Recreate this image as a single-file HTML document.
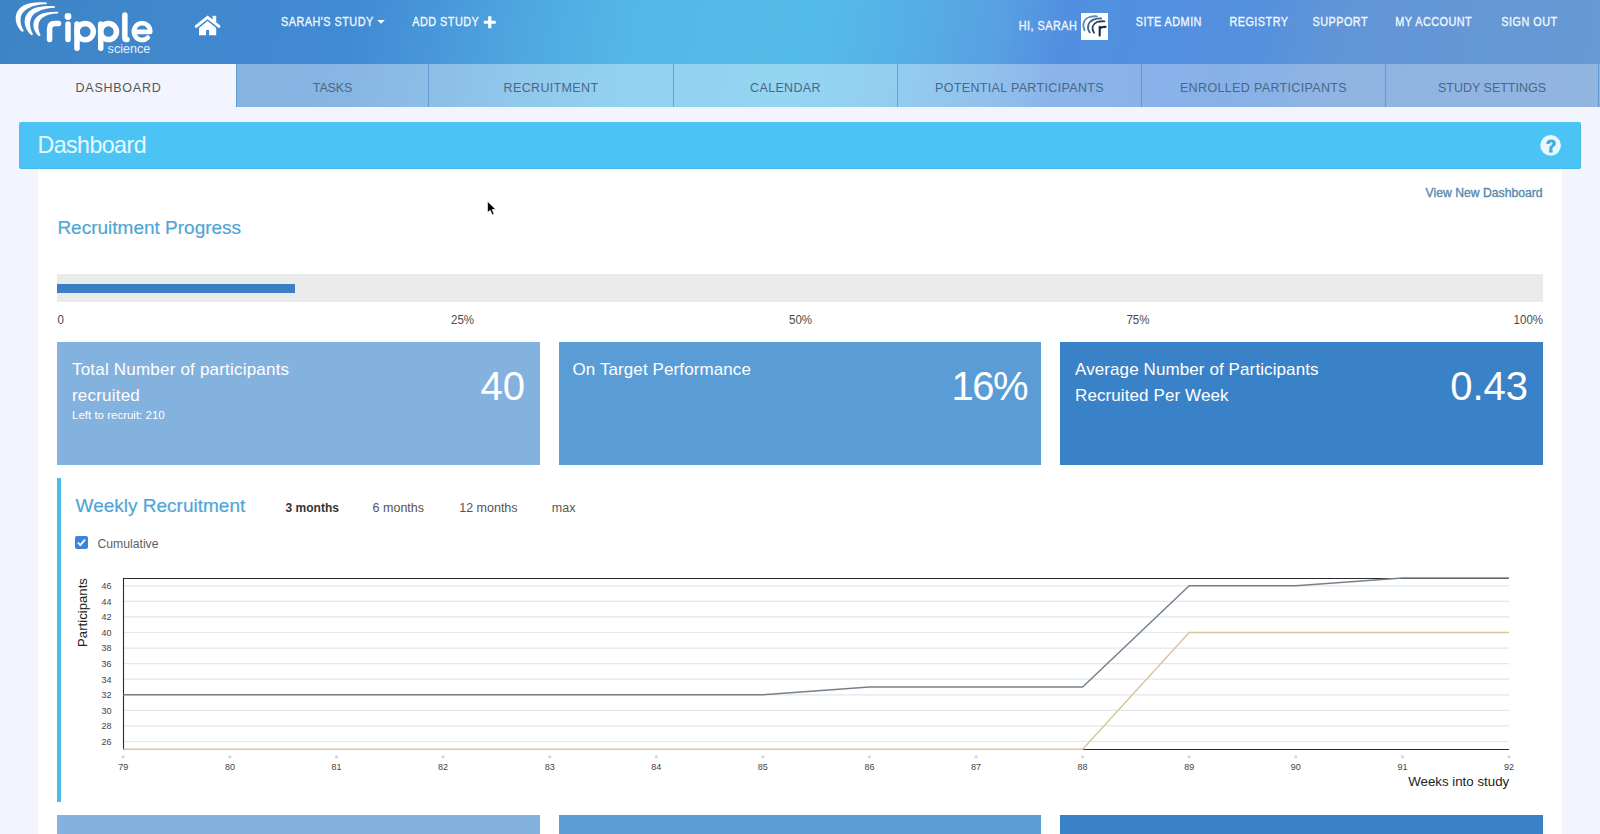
<!DOCTYPE html>
<html><head><meta charset="utf-8"><title>Dashboard</title>
<style>
*{margin:0;padding:0;box-sizing:border-box}
html,body{width:1600px;height:834px;overflow:hidden;background:#f2f5fd;font-family:"Liberation Sans",sans-serif}
.a{position:absolute}
svg{position:absolute;left:0;top:0}
</style></head><body>
<div class="a" style="left:0;top:0;width:1600px;height:107px;background:linear-gradient(100deg,#3d84c6 0%,#4087cc 10%,#418ad4 22%,#4896d9 27%,#50a8e1 33%,#54b8e9 40%,#54bcea 50%,#56b0e7 56%,#58a0e2 62%,#518fe0 66%,#5490dd 78%,#6295d7 83%,#6799d4 100%)"></div>
<div class="a" style="left:0;top:64px;width:1600px;height:43px;background:linear-gradient(90deg,rgba(255,255,255,.37) 0%,rgba(255,255,255,.37) 55%,rgba(255,255,255,.3) 75%,rgba(255,255,255,.28) 100%)"></div>
<div class="a" style="left:0;top:64px;width:236px;height:43px;background:#f2f5fd"></div>
<div class="a" style="left:236px;top:64px;width:1px;height:43px;background:rgba(55,125,190,0.5)"></div>
<div class="a" style="left:428px;top:64px;width:1px;height:43px;background:rgba(55,125,190,0.5)"></div>
<div class="a" style="left:673px;top:64px;width:1px;height:43px;background:rgba(55,125,190,0.5)"></div>
<div class="a" style="left:897px;top:64px;width:1px;height:43px;background:rgba(55,125,190,0.5)"></div>
<div class="a" style="left:1141px;top:64px;width:1px;height:43px;background:rgba(55,125,190,0.5)"></div>
<div class="a" style="left:1385px;top:64px;width:1px;height:43px;background:rgba(55,125,190,0.5)"></div>
<div class="a" style="left:1598px;top:64px;width:1px;height:43px;background:rgba(55,125,190,0.5)"></div>
<div class="a" style="left:19px;top:122px;width:1562px;height:47px;background:#4bc3f5;border-radius:2px;box-shadow:inset 0 -1px 0 rgba(40,120,170,0.12),inset -1px 0 0 rgba(40,120,170,0.12)"></div>
<div class="a" style="left:38px;top:169px;width:1524px;height:680px;background:#fff"></div>
<div class="a" style="left:57px;top:274px;width:1486px;height:28px;background:#e9ebeb"></div>
<div class="a" style="left:57px;top:284px;width:238px;height:9px;background:#3a7fc4"></div>
<div class="a" style="left:57px;top:342px;width:483px;height:123px;background:#84b2de"></div>
<div class="a" style="left:57px;top:815px;width:483px;height:30px;background:#84b2de"></div>
<div class="a" style="left:559px;top:342px;width:482px;height:123px;background:#5a9dd6"></div>
<div class="a" style="left:559px;top:815px;width:482px;height:30px;background:#5a9dd6"></div>
<div class="a" style="left:1060px;top:342px;width:483px;height:123px;background:#3a82c8"></div>
<div class="a" style="left:1060px;top:815px;width:483px;height:30px;background:#3a82c8"></div>
<div class="a" style="left:57px;top:478px;width:4px;height:324px;background:#4bbde9"></div>
<div class="a" style="left:75px;top:536px;width:12.5px;height:12.5px;background:#3a86d8;border-radius:2px"></div>
<svg width="1600" height="834" viewBox="0 0 1600 834" font-family='"Liberation Sans", sans-serif'>
<g fill="#fff">
<path d="M21.5,31.5 C14.5,24 12.5,12 23.5,5.5 C30,2 39,1.8 46.5,2.5 Q47.3,3.4 46.5,4.2 C39,4.2 30,6 25,10.5 C19.5,14.5 19,23 23.8,30.8 Q22.8,32 21.5,31.5 Z"/>
<path d="M30.8,34.8 C22.8,27 22,15 32.5,9 C39,5.8 47,5.6 54.6,6.2 Q55.4,7 54.6,7.9 C47,7.9 39,9.8 34,14 C29.5,18 28.5,26 33,34.2 Q32,35.5 30.8,34.8 Z"/>
<path d="M38.3,35.8 C32,29.5 31,20 39.5,14.8 C45,12 51.5,11.5 58,11.8 Q58.7,12.6 58,13.4 C52,13.4 46,14.8 42,18 C38,21.5 37,28 40.6,35.3 Q39.5,36.5 38.3,35.8 Z"/>
<circle cx="68" cy="16.5" r="3.4"/>
</g>
<g fill="none" stroke="#fff" stroke-width="5.5" stroke-linecap="round" stroke-linejoin="round">
<path d="M49.6,39.6 V29 C49.6,25.5 51.5,23.6 55,23.6 H58.6"/>
<path d="M68,24 V39.6"/>
<path d="M77,24 V48.2"/>
<circle cx="85.2" cy="31.6" r="8.1"/>
<path d="M100.75,24 V48.2"/>
<circle cx="108.5" cy="31.6" r="8.0"/>
<path d="M124.85,15 V37.5 C124.85,39 125.6,39.6 127,39.6"/>
<path d="M134.1,31.9 H150.3 A8.2,8.4 0 1 0 147.8,37.6" stroke-width="4.6"/>
</g>
<text x="107.6" y="53.4" font-size="12.6" fill="#e2f3fc" font-weight="normal" text-anchor="start" >science</text>
<g fill="#fff"><path d="M196.2,26.4 L207.6,17.3 L219,26.4" fill="none" stroke="#fff" stroke-width="2.9" stroke-linecap="round" stroke-linejoin="miter"/><rect x="212.6" y="15.8" width="3.6" height="6"/><path d="M199,35.2 V28 L207.6,21 L216.2,28 V35.2 H209.1 V30 H206.1 V35.2 Z"/></g>
<text transform="translate(281,26) scale(0.85,1)" x="0" y="0" font-size="12.8" fill="#f4f8fc" font-weight="normal" text-anchor="start" stroke="#f4f8fc" stroke-width="0.32" letter-spacing="0.55">SARAH'S STUDY</text>
<path d="M377.2,20 H384.8 L381,23.8 Z" fill="#fff"/>
<text transform="translate(412.3,26) scale(0.85,1)" x="0" y="0" font-size="12.8" fill="#f4f8fc" font-weight="normal" text-anchor="start" stroke="#f4f8fc" stroke-width="0.32" letter-spacing="0.55">ADD STUDY</text>
<path d="M489.75,16.3 V28.2 M483.8,22.25 H495.7" stroke="#fff" stroke-width="3.2"/>
<text transform="translate(1018.7,29.5) scale(0.85,1)" x="0" y="0" font-size="12.8" fill="#f4f8fc" font-weight="normal" text-anchor="start" stroke="#f4f8fc" stroke-width="0.32" letter-spacing="0.55">HI, SARAH</text>
<rect x="1081" y="13" width="27" height="27" fill="#fff"/>
<g fill="none" stroke-linecap="round"><path d="M1084.6,30.2 C1081.8,25 1083.5,19 1089.5,17 C1092,16.3 1094.5,16.2 1096.9,16.3" stroke="#5b8bb2" stroke-width="1.8"/><path d="M1089.7,32.4 C1086.5,27.5 1088,22 1093.5,19.6 C1096,18.6 1098.5,18.4 1101.2,18.4" stroke="#3f6288" stroke-width="1.8"/><path d="M1094,32.8 C1091,28.5 1092.5,24 1097,22 C1099.5,21.2 1102,21.2 1104.5,21.3" stroke="#35404d" stroke-width="1.8"/><path d="M1099.7,35.6 V26.8 M1099.9,29 C1100.5,27 1102.5,26.8 1105.5,26.9" stroke="#1b2c44" stroke-width="2.1"/></g>
<text transform="translate(1135.7,26) scale(0.85,1)" x="0" y="0" font-size="12.8" fill="#f4f8fc" font-weight="normal" text-anchor="start" stroke="#f4f8fc" stroke-width="0.32" letter-spacing="0.55">SITE ADMIN</text>
<text transform="translate(1229.4,26) scale(0.85,1)" x="0" y="0" font-size="12.8" fill="#f4f8fc" font-weight="normal" text-anchor="start" stroke="#f4f8fc" stroke-width="0.32" letter-spacing="0.55">REGISTRY</text>
<text transform="translate(1312.5,26) scale(0.85,1)" x="0" y="0" font-size="12.8" fill="#f4f8fc" font-weight="normal" text-anchor="start" stroke="#f4f8fc" stroke-width="0.32" letter-spacing="0.55">SUPPORT</text>
<text transform="translate(1395.3,26) scale(0.85,1)" x="0" y="0" font-size="12.8" fill="#f4f8fc" font-weight="normal" text-anchor="start" stroke="#f4f8fc" stroke-width="0.32" letter-spacing="0.55">MY ACCOUNT</text>
<text transform="translate(1501.3,26) scale(0.85,1)" x="0" y="0" font-size="12.8" fill="#f4f8fc" font-weight="normal" text-anchor="start" stroke="#f4f8fc" stroke-width="0.32" letter-spacing="0.55">SIGN OUT</text>
<text x="118.5" y="92.1" font-size="12.5" fill="#555" font-weight="normal" text-anchor="middle" letter-spacing="0.75" >DASHBOARD</text>
<text x="332.5" y="92.1" font-size="12.5" fill="#486888" font-weight="normal" text-anchor="middle" letter-spacing="-0.15" >TASKS</text>
<text x="551.0" y="92.1" font-size="12.5" fill="#486888" font-weight="normal" text-anchor="middle" letter-spacing="0.35" >RECRUITMENT</text>
<text x="785.5" y="92.1" font-size="12.5" fill="#486888" font-weight="normal" text-anchor="middle" letter-spacing="0.35" >CALENDAR</text>
<text x="1019.5" y="92.1" font-size="12.5" fill="#486888" font-weight="normal" text-anchor="middle" letter-spacing="0.35" >POTENTIAL PARTICIPANTS</text>
<text x="1263.5" y="92.1" font-size="12.5" fill="#486888" font-weight="normal" text-anchor="middle" letter-spacing="0.35" >ENROLLED PARTICIPANTS</text>
<text x="1492.0" y="92.1" font-size="12.5" fill="#486888" font-weight="normal" text-anchor="middle" >STUDY SETTINGS</text>
<text x="37.5" y="153.4" font-size="23.2" fill="#e8f8fe" font-weight="normal" text-anchor="start" letter-spacing="-0.55" >Dashboard</text>
<circle cx="1550.6" cy="145.4" r="10.3" fill="#e6f7fd"/>
<text x="1551" y="152.2" font-size="16.5" fill="#49a9d6" font-weight="bold" text-anchor="middle" stroke="#49a9d6" stroke-width="0.9">?</text>
<text x="1542.6" y="197.4" font-size="12.2" fill="#5689b0" font-weight="normal" text-anchor="end" stroke="#5689b0" stroke-width="0.35">View New Dashboard</text>
<text x="57.4" y="233.6" font-size="19" fill="#4ea6d6" font-weight="normal" text-anchor="start" stroke="#4ea6d6" stroke-width="0.2">Recruitment Progress</text>
<text transform="translate(57.4,324.2) scale(0.9,1)" x="0" y="0" font-size="12.8" fill="#4a4a4a" font-weight="normal" text-anchor="start" >0</text>
<text transform="translate(451,324.2) scale(0.9,1)" x="0" y="0" font-size="12.8" fill="#4a4a4a" font-weight="normal" text-anchor="start" >25%</text>
<text transform="translate(789,324.2) scale(0.9,1)" x="0" y="0" font-size="12.8" fill="#4a4a4a" font-weight="normal" text-anchor="start" >50%</text>
<text transform="translate(1126.4,324.2) scale(0.9,1)" x="0" y="0" font-size="12.8" fill="#4a4a4a" font-weight="normal" text-anchor="start" >75%</text>
<text transform="translate(1543,324.2) scale(0.9,1)" x="0" y="0" font-size="12.8" fill="#4a4a4a" font-weight="normal" text-anchor="end" >100%</text>
<text x="72" y="374.75" font-size="17" fill="#fff" font-weight="normal" text-anchor="start" letter-spacing="0.2" >Total Number of participants</text>
<text x="72" y="400.8" font-size="17" fill="#fff" font-weight="normal" text-anchor="start" letter-spacing="0.2" >recruited</text>
<text x="72" y="419.3" font-size="11.5" fill="#fff" font-weight="normal" text-anchor="start" >Left to recruit: 210</text>
<text x="525" y="399.9" font-size="40" fill="#fff" font-weight="normal" text-anchor="end" >40</text>
<text x="572.5" y="374.75" font-size="17" fill="#fff" font-weight="normal" text-anchor="start" letter-spacing="0.1" >On Target Performance</text>
<text x="1027" y="399.9" font-size="40" fill="#fff" font-weight="normal" text-anchor="end" letter-spacing="-1.5" >16%</text>
<text x="1075" y="374.75" font-size="17" fill="#fff" font-weight="normal" text-anchor="start" letter-spacing="0.1" >Average Number of Participants</text>
<text x="1075" y="400.8" font-size="17" fill="#fff" font-weight="normal" text-anchor="start" letter-spacing="0.1" >Recruited Per Week</text>
<text x="1528" y="399.9" font-size="40" fill="#fff" font-weight="normal" text-anchor="end" >0.43</text>
<text x="75.6" y="511.9" font-size="19" fill="#4ea6d6" font-weight="normal" text-anchor="start" stroke="#4ea6d6" stroke-width="0.2">Weekly Recruitment</text>
<text x="285.6" y="512" font-size="12" fill="#333" font-weight="bold" text-anchor="start" >3 months</text>
<text x="372.6" y="512" font-size="12.5" fill="#555" font-weight="normal" text-anchor="start" >6 months</text>
<text x="459.2" y="512" font-size="12.5" fill="#555" font-weight="normal" text-anchor="start" >12 months</text>
<text x="551.8" y="512" font-size="12.5" fill="#555" font-weight="normal" text-anchor="start" >max</text>
<path d="M77.8,542.5 L80.3,545.2 L85,539.6" fill="none" stroke="#fff" stroke-width="1.8"/>
<text x="97.5" y="548.3" font-size="12.2" fill="#606060" font-weight="normal" text-anchor="start" >Cumulative</text>
<line x1="123.3" x2="1509.0" y1="741.51" y2="741.51" stroke="#e2e7ed" stroke-width="1.2"/>
<text x="111.5" y="744.81" font-size="9" fill="#444" font-weight="normal" text-anchor="end" >26</text>
<line x1="123.3" x2="1509.0" y1="725.94" y2="725.94" stroke="#e2e7ed" stroke-width="1.2"/>
<text x="111.5" y="729.24" font-size="9" fill="#444" font-weight="normal" text-anchor="end" >28</text>
<line x1="123.3" x2="1509.0" y1="710.37" y2="710.37" stroke="#e2e7ed" stroke-width="1.2"/>
<text x="111.5" y="713.67" font-size="9" fill="#444" font-weight="normal" text-anchor="end" >30</text>
<line x1="123.3" x2="1509.0" y1="694.80" y2="694.80" stroke="#e2e7ed" stroke-width="1.2"/>
<text x="111.5" y="698.10" font-size="9" fill="#444" font-weight="normal" text-anchor="end" >32</text>
<line x1="123.3" x2="1509.0" y1="679.22" y2="679.22" stroke="#e2e7ed" stroke-width="1.2"/>
<text x="111.5" y="682.52" font-size="9" fill="#444" font-weight="normal" text-anchor="end" >34</text>
<line x1="123.3" x2="1509.0" y1="663.65" y2="663.65" stroke="#e2e7ed" stroke-width="1.2"/>
<text x="111.5" y="666.95" font-size="9" fill="#444" font-weight="normal" text-anchor="end" >36</text>
<line x1="123.3" x2="1509.0" y1="648.08" y2="648.08" stroke="#e2e7ed" stroke-width="1.2"/>
<text x="111.5" y="651.38" font-size="9" fill="#444" font-weight="normal" text-anchor="end" >38</text>
<line x1="123.3" x2="1509.0" y1="632.50" y2="632.50" stroke="#e2e7ed" stroke-width="1.2"/>
<text x="111.5" y="635.80" font-size="9" fill="#444" font-weight="normal" text-anchor="end" >40</text>
<line x1="123.3" x2="1509.0" y1="616.93" y2="616.93" stroke="#e2e7ed" stroke-width="1.2"/>
<text x="111.5" y="620.23" font-size="9" fill="#444" font-weight="normal" text-anchor="end" >42</text>
<line x1="123.3" x2="1509.0" y1="601.36" y2="601.36" stroke="#e2e7ed" stroke-width="1.2"/>
<text x="111.5" y="604.66" font-size="9" fill="#444" font-weight="normal" text-anchor="end" >44</text>
<line x1="123.3" x2="1509.0" y1="585.79" y2="585.79" stroke="#e2e7ed" stroke-width="1.2"/>
<text x="111.5" y="589.09" font-size="9" fill="#444" font-weight="normal" text-anchor="end" >46</text>
<line x1="123.3" x2="1509.0" y1="578.5" y2="578.5" stroke="#2a2a2a" stroke-width="1.1"/>
<line x1="123.5" x2="123.5" y1="578.0" y2="750" stroke="#2a2a2a" stroke-width="1.1"/>
<circle cx="123.30" cy="756.8" r="1.6" fill="#cfd6dd"/>
<text x="123.30" y="770.3" font-size="9" fill="#444" font-weight="normal" text-anchor="middle" >79</text>
<circle cx="229.89" cy="756.8" r="1.6" fill="#cfd6dd"/>
<text x="229.89" y="770.3" font-size="9" fill="#444" font-weight="normal" text-anchor="middle" >80</text>
<circle cx="336.48" cy="756.8" r="1.6" fill="#cfd6dd"/>
<text x="336.48" y="770.3" font-size="9" fill="#444" font-weight="normal" text-anchor="middle" >81</text>
<circle cx="443.08" cy="756.8" r="1.6" fill="#cfd6dd"/>
<text x="443.08" y="770.3" font-size="9" fill="#444" font-weight="normal" text-anchor="middle" >82</text>
<circle cx="549.67" cy="756.8" r="1.6" fill="#cfd6dd"/>
<text x="549.67" y="770.3" font-size="9" fill="#444" font-weight="normal" text-anchor="middle" >83</text>
<circle cx="656.26" cy="756.8" r="1.6" fill="#cfd6dd"/>
<text x="656.26" y="770.3" font-size="9" fill="#444" font-weight="normal" text-anchor="middle" >84</text>
<circle cx="762.85" cy="756.8" r="1.6" fill="#cfd6dd"/>
<text x="762.85" y="770.3" font-size="9" fill="#444" font-weight="normal" text-anchor="middle" >85</text>
<circle cx="869.45" cy="756.8" r="1.6" fill="#cfd6dd"/>
<text x="869.45" y="770.3" font-size="9" fill="#444" font-weight="normal" text-anchor="middle" >86</text>
<circle cx="976.04" cy="756.8" r="1.6" fill="#cfd6dd"/>
<text x="976.04" y="770.3" font-size="9" fill="#444" font-weight="normal" text-anchor="middle" >87</text>
<circle cx="1082.63" cy="756.8" r="1.6" fill="#cfd6dd"/>
<text x="1082.63" y="770.3" font-size="9" fill="#444" font-weight="normal" text-anchor="middle" >88</text>
<circle cx="1189.22" cy="756.8" r="1.6" fill="#cfd6dd"/>
<text x="1189.22" y="770.3" font-size="9" fill="#444" font-weight="normal" text-anchor="middle" >89</text>
<circle cx="1295.82" cy="756.8" r="1.6" fill="#cfd6dd"/>
<text x="1295.82" y="770.3" font-size="9" fill="#444" font-weight="normal" text-anchor="middle" >90</text>
<circle cx="1402.41" cy="756.8" r="1.6" fill="#cfd6dd"/>
<text x="1402.41" y="770.3" font-size="9" fill="#444" font-weight="normal" text-anchor="middle" >91</text>
<circle cx="1509.00" cy="756.8" r="1.6" fill="#cfd6dd"/>
<text x="1509.00" y="770.3" font-size="9" fill="#444" font-weight="normal" text-anchor="middle" >92</text>
<line x1="123.3" x2="1509.0" y1="749.5" y2="749.5" stroke="#2a2a2a" stroke-width="1.1"/>
<polyline points="123.30,749.30 1082.63,749.30 1189.22,632.50 1509.00,632.50" fill="none" stroke="#d9c49e" stroke-width="1.4"/>
<polyline points="123.30,694.80 762.85,694.80 869.45,687.01 1082.63,687.01 1189.22,585.79 1295.82,585.79 1402.41,578.00 1509.00,578.00" fill="none" stroke="#75808a" stroke-width="1.4"/>
<text x="1509.2" y="786" font-size="13.3" fill="#222" font-weight="normal" text-anchor="end" >Weeks into study</text>
<text transform="translate(87,612.5) rotate(-90)" text-anchor="middle" font-size="13.2" fill="#222">Participants</text>
<path d="M487.6,201.5 L487.6,212.5 L490.2,210.2 L492.2,214.8 L494,214 L492.1,209.6 L495.6,209.3 Z" fill="#000" stroke="#fff" stroke-width="0.6"/>
</svg>
</body></html>
